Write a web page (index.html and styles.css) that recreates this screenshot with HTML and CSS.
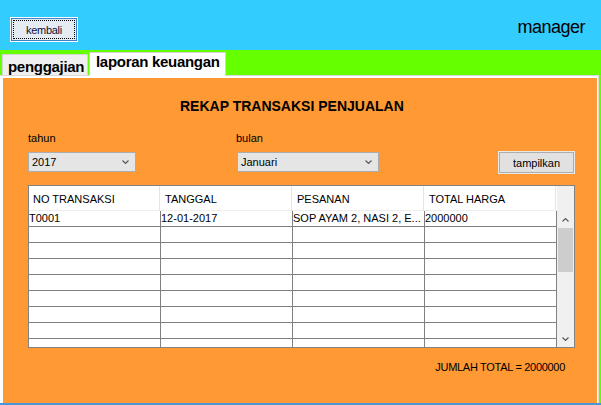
FILE: index.html
```html
<!DOCTYPE html>
<html lang="id">
<head>
<meta charset="utf-8">
<title>Laporan Keuangan</title>
<link rel="stylesheet" href="styles.css">
</head>
<body>
<div class="app">
  <header class="topbar">
    <button class="btn-back" type="button">kembali</button>
    <span class="role">manager</span>
  </header>
  <nav class="tabs">
    <div class="tab">penggajian</div>
    <div class="tab tab-active">laporan keuangan</div>
  </nav>
  <main class="content">
    <section class="panel">
      <h1 class="title">REKAP TRANSAKSI PENJUALAN</h1>
      <div class="filters">
        <span class="lbl">tahun</span>
        <span class="lbl lbl-bulan">bulan</span>
        <span></span>
        <div class="combo combo-year"><span>2017</span><svg class="chev" width="7" height="4" viewBox="0 0 7 4"><path d="M0.5 0.5 L3.5 3.5 L6.5 0.5"/></svg></div>
        <div class="combo combo-month"><span>Januari</span><svg class="chev" width="7" height="4" viewBox="0 0 7 4"><path d="M0.5 0.5 L3.5 3.5 L6.5 0.5"/></svg></div>
        <button class="btn-show" type="button">tampilkan</button>
      </div>
      <div class="table">
        <div class="thead">
          <div class="th">NO TRANSAKSI</div>
          <div class="th">TANGGAL</div>
          <div class="th">PESANAN</div>
          <div class="th">TOTAL HARGA</div>
        </div>
        <div class="corner"></div>
        <div class="tbody">
          <div class="tr"><div class="td">T0001</div><div class="td">12-01-2017</div><div class="td">SOP AYAM 2, NASI 2, E...</div><div class="td">2000000</div></div>
          <div class="tr"><div class="td"></div><div class="td"></div><div class="td"></div><div class="td"></div></div>
          <div class="tr"><div class="td"></div><div class="td"></div><div class="td"></div><div class="td"></div></div>
          <div class="tr"><div class="td"></div><div class="td"></div><div class="td"></div><div class="td"></div></div>
          <div class="tr"><div class="td"></div><div class="td"></div><div class="td"></div><div class="td"></div></div>
          <div class="tr"><div class="td"></div><div class="td"></div><div class="td"></div><div class="td"></div></div>
          <div class="tr"><div class="td"></div><div class="td"></div><div class="td"></div><div class="td"></div></div>
          <div class="tr"><div class="td"></div><div class="td"></div><div class="td"></div><div class="td"></div></div>
          <div class="tr"><div class="td"></div><div class="td"></div><div class="td"></div><div class="td"></div></div>
        </div>
        <div class="vscroll">
          <div class="arrow"><svg width="7" height="4" viewBox="0 0 7 4"><path d="M0.5 3.5 L3.5 0.5 L6.5 3.5"/></svg></div>
          <div class="thumb"></div>
          <div class="track"></div>
          <div class="arrow"><svg width="7" height="4" viewBox="0 0 7 4"><path d="M0.5 0.5 L3.5 3.5 L6.5 0.5"/></svg></div>
        </div>
      </div>
      <div class="total">JUMLAH TOTAL = 2000000</div>
    </section>
  </main>
</div>
</body>
</html>
```

FILE: styles.css
```css
* { box-sizing: border-box; margin: 0; padding: 0; }
html, body { width: 601px; height: 405px; overflow: hidden; }
body {
  font-family: "Liberation Sans", Arial, sans-serif;
  font-size: 11px;
  color: #000;
  background: #66ff00;
}
.app {
  width: 601px;
  height: 405px;
  display: flex;
  flex-direction: column;
  background: #66ff00;
  border-bottom: 2px solid #4a94d8;
}

/* header */
.topbar {
  height: 50px;
  flex: none;
  background: #33ccff;
  display: flex;
  align-items: flex-start;
  justify-content: space-between;
  padding: 17px 16px 0 10px;
}
.btn-back {
  width: 68px;
  height: 25px;
  border: 1px solid #fff;
  box-shadow: inset 0 0 0 1px #3c82cc;
  background: #e4ebf3;
  font-family: inherit;
  font-size: 11px;
  letter-spacing: -0.3px;
  color: #111133;
  outline: 1px dotted #000;
  outline-offset: -4px;
}
.role {
  font-size: 18px;
  line-height: 20px;
  letter-spacing: -0.5px;
  color: #000;
}

/* tabs */
.tabs {
  height: 25px;
  flex: none;
  display: flex;
  align-items: flex-end;
  padding-left: 2px;
}
.tab {
  height: 21px;
  width: 86px;
  border: 1px solid #d5d5d5;
  border-bottom: 0;
  background: #f0f0f0;
  font-weight: bold;
  font-size: 15px;
  line-height: 17px;
  letter-spacing: -0.3px;
  padding: 3px 0 0 5px;
  white-space: nowrap;
}
.tab-active {
  position: relative;
  z-index: 1;
  height: 24px;
  width: 137px;
  margin-left: 1px;
  margin-bottom: -1px;
  background: #fff;
  padding: 0 0 0 6px;
}

/* content */
.content {
  flex: 1;
  display: flex;
  background: #fff;
  border-top: 1px solid #d9d9d9;
  border-right: 1px solid #dcdcdc;
  margin-right: 2px;
  padding: 2px 1px 0 3px;
}
.panel {
  flex: 1;
  background: #ff9933;
  display: flex;
  flex-direction: column;
}
.title {
  margin: 20px 0 0 177px;
  font-size: 14px;
  line-height: 16px;
  font-weight: bold;
}

.filters {
  margin: 18px 0 0 25px;
  display: grid;
  grid-template-columns: 209px 261px 77px;
  grid-template-rows: 13px 20px;
  row-gap: 7px;
}
.lbl { line-height: 13px; }
.lbl-bulan { margin-left: -1px; }
.combo {
  height: 20px;
  border: 1px solid #acacac;
  background: #e5e5e5;
  display: flex;
  align-items: center;
  justify-content: space-between;
  padding: 0 6px 0 3px;
  line-height: 18px;
}
.combo-year { width: 108px; }
.combo-month { width: 142px; }
.chev path, .arrow path {
  fill: none;
  stroke: #555;
  stroke-width: 1.1;
}
.btn-show {
  width: 77px;
  height: 23px;
  margin-top: -1px;
  border: 1px solid #e9e9e9;
  box-shadow: inset 0 0 0 1px #adadad;
  background: #e1e1e1;
  font-family: inherit;
  font-size: 11px;
  color: #000;
}

/* table */
.table {
  margin: 13px 0 0 25px;
  width: 547px;
  height: 163px;
  border: 1px solid #828282;
  background: #fff;
  display: grid;
  grid-template-columns: 528px 17px;
  grid-template-rows: 25px 136px;
}
.thead {
  display: flex;
  border-bottom: 1px solid #eeeeee;
}
.th {
  width: 131px;
  margin-right: 1px;
  border-right: 1px solid #e5e5e5;
  height: 24px;
  padding: 2px 0 0 4px;
  line-height: 22px;
  white-space: nowrap;
}
.corner { background: #f0f0f0; }
.tbody { overflow: hidden; }
.tr {
  display: flex;
  height: 16px;
  border-bottom: 1px solid #808080;
}
.td {
  width: 132px;
  border-right: 1px solid #808080;
  line-height: 15px;
  white-space: nowrap;
  overflow: hidden;
}
.vscroll {
  background: #f0f0f0;
  display: flex;
  flex-direction: column;
}
.arrow {
  height: 17px;
  display: flex;
  align-items: center;
  justify-content: center;
  flex: none;
}
.thumb {
  height: 44px;
  margin: 0 1px;
  background: #cdcdcd;
  flex: none;
}
.track { flex: 1; }

.total {
  margin-top: 13px;
  padding-right: 32px;
  text-align: right;
  line-height: 13px;
  letter-spacing: -0.3px;
}
```
